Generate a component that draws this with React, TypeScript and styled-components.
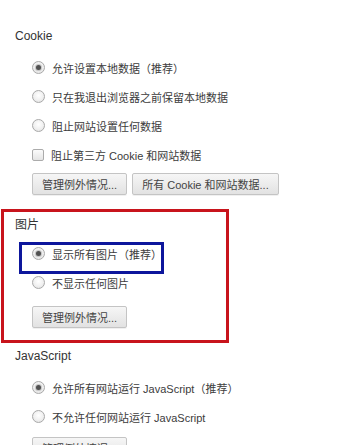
import styled, { createGlobalStyle } from "styled-components";

const GlobalStyle = createGlobalStyle`
  body {
    margin: 0;
    background: #ffffff;
    font-family: "Liberation Sans", "Noto Sans CJK SC", sans-serif;
    color: #3a3a3a;
  }
`;

const Page = styled.div`
  padding: 28px 0 0 1px;
  width: 357px;
  height: 445px;
  box-sizing: border-box;
  overflow: hidden;
`;

const Section = styled.section<{ $boxed?: boolean; $top?: number }>`
  width: 228px;
  box-sizing: border-box;
  margin-top: ${(p) => p.$top ?? 0}px;
  ${(p) =>
    p.$boxed
      ? `border: 3px solid #c8141c; padding: 5px 0 12px 11px;`
      : `padding: 0 0 0 14px;`}
`;

const Heading = styled.h3`
  margin: 0;
  font-size: 12px;
  line-height: 16px;
  font-weight: normal;
  color: #333;
`;

const OptionList = styled.div<{ $top: number }>`
  margin-top: ${(p) => p.$top}px;
  padding-left: 17px;
  display: flex;
  flex-direction: column;
`;

const Option = styled.label<{ $marked?: boolean }>`
  position: relative;
  height: 29px;
  display: flex;
  align-items: center;
  gap: 7px;
  font-size: 11px;
  color: #3c3c3c;
  white-space: nowrap;
  ${(p) =>
    p.$marked &&
    `&::after {
      content: "";
      position: absolute;
      left: -13px;
      top: 3px;
      width: 145px;
      height: 32px;
      box-sizing: border-box;
      border: 3px solid #0d169c;
    }`}
`;

const Radio = styled.span<{ $checked?: boolean }>`
  width: 13px;
  height: 13px;
  flex: none;
  box-sizing: border-box;
  border-radius: 50%;
  border: 1px solid #a9a9a9;
  background: radial-gradient(circle at 50% 40%, #ffffff 0%, #f0f0f0 55%, #dcdcdc 100%);
  display: flex;
  align-items: center;
  justify-content: center;
  &::before {
    content: "";
    width: 5px;
    height: 5px;
    border-radius: 50%;
    background: ${(p) => (p.$checked ? "#505050" : "transparent")};
    box-shadow: ${(p) => (p.$checked ? "0 0 1px 1px rgba(90,90,90,0.35)" : "none")};
  }
`;

const Checkbox = styled.span`
  width: 12px;
  height: 12px;
  flex: none;
  box-sizing: border-box;
  border: 1px solid #ababab;
  border-radius: 2px;
  background: linear-gradient(#fbfbfb, #e4e4e4);
`;

const ButtonRow = styled.div<{ $top: number }>`
  margin-top: ${(p) => p.$top}px;
  padding-left: 17px;
  display: flex;
  gap: 5px;
`;

const Button = styled.button`
  height: 22px;
  padding: 0 9px;
  box-sizing: border-box;
  border: 1px solid #c4c4c4;
  border-radius: 2px;
  background: linear-gradient(#f6f6f6, #e2e2e2);
  color: #444;
  font-family: inherit;
  font-size: 11px;
  white-space: nowrap;
  box-shadow: 0 1px 0 rgba(0, 0, 0, 0.06);
`;

export default function App() {
  return (
    <Page>
      <GlobalStyle />
      <Section>
        <Heading>Cookie</Heading>
        <OptionList $top={9}>
          <Option>
            <Radio $checked />
            允许设置本地数据（推荐）
          </Option>
          <Option>
            <Radio />
            只在我退出浏览器之前保留本地数据
          </Option>
          <Option>
            <Radio />
            阻止网站设置任何数据
          </Option>
          <Option>
            <Checkbox />
            阻止第三方 Cookie 和网站数据
          </Option>
        </OptionList>
        <ButtonRow $top={4}>
          <Button>管理例外情况...</Button>
          <Button>所有 Cookie 和网站数据...</Button>
        </ButtonRow>
      </Section>

      <Section $boxed $top={14}>
        <Heading>图片</Heading>
        <OptionList $top={6}>
          <Option $marked>
            <Radio $checked />
            显示所有图片（推荐）
          </Option>
          <Option>
            <Radio />
            不显示任何图片
          </Option>
        </OptionList>
        <ButtonRow $top={9}>
          <Button>管理例外情况...</Button>
        </ButtonRow>
      </Section>

      <Section $top={5}>
        <Heading>JavaScript</Heading>
        <OptionList $top={9}>
          <Option>
            <Radio $checked />
            允许所有网站运行 JavaScript（推荐）
          </Option>
          <Option>
            <Radio />
            不允许任何网站运行 JavaScript
          </Option>
        </OptionList>
        <ButtonRow $top={6}>
          <Button>管理例外情况...</Button>
        </ButtonRow>
      </Section>
    </Page>
  );
}
